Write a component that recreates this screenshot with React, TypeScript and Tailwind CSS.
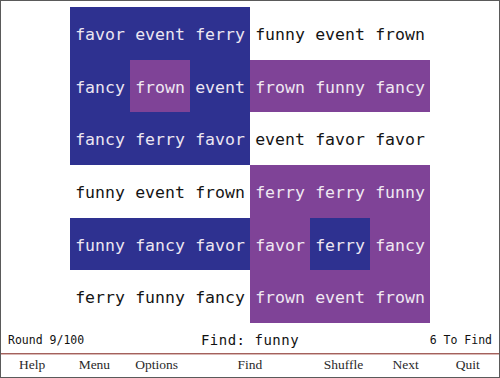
import React from "react";

type C = "b" | "p" | "w";
const rows: { words: string[]; colors: C[] }[] = [
  { words: ["favor", "event", "ferry", "funny", "event", "frown"], colors: ["b", "b", "b", "w", "w", "w"] },
  { words: ["fancy", "frown", "event", "frown", "funny", "fancy"], colors: ["b", "p", "b", "p", "p", "p"] },
  { words: ["fancy", "ferry", "favor", "event", "favor", "favor"], colors: ["b", "b", "b", "w", "w", "w"] },
  { words: ["funny", "event", "frown", "ferry", "ferry", "funny"], colors: ["w", "w", "w", "p", "p", "p"] },
  { words: ["funny", "fancy", "favor", "favor", "ferry", "fancy"], colors: ["b", "b", "b", "p", "b", "p"] },
  { words: ["ferry", "funny", "fancy", "frown", "event", "frown"], colors: ["w", "w", "w", "p", "p", "p"] },
];

const heights = ["h-[53px]", "h-[52px]", "h-[53px]", "h-[53px]", "h-[52px]", "h-[53px]"];

function cellClass(c: C) {
  if (c === "b") return "bg-[#2e3190] text-[#ece6f2]";
  if (c === "p") return "bg-[#7f4397] text-[#f0e8f2]";
  return "bg-white text-[#141414]";
}

export default function App() {
  const mono = { fontFamily: '"DejaVu Sans Mono", "Liberation Mono", monospace' };
  const serif = { fontFamily: '"Liberation Serif", serif' };
  return (
    <div className="w-[500px] h-[378px] bg-white border border-[#5a5a5a] flex flex-col overflow-hidden">
      <div className="flex justify-center pt-[6px]">
        <div className="flex flex-col w-[360px]">
          {rows.map((r, i) => (
            <div key={i} className={`flex ${heights[i]}`}>
              {r.words.map((w, j) => (
                <div
                  key={j}
                  className={`w-[60px] h-full flex items-center justify-center pt-[4px] text-[16.5px] leading-none ${cellClass(r.colors[j])}`}
                  style={mono}
                >
                  {w}
                </div>
              ))}
            </div>
          ))}
        </div>
      </div>
      <div className="h-[30px] flex items-center justify-between px-[7px] pt-[5px] text-[#111]" style={mono}>
        <div className="w-[120px] text-[11.5px]">Round 9/100</div>
        <div className="text-[14px] tracking-[0.5px]">Find: funny</div>
        <div className="w-[120px] text-right text-[11.5px]">6 To Find</div>
      </div>
      <div className="h-[2px] bg-[#a3615c] border-b border-[#d9b8b5]" />
      <div className="grid grid-cols-8 h-[22px] items-center pb-[5px] text-[13.5px] text-[#2a2a2a]" style={serif}>
        <div className="text-center">Help</div>
        <div className="text-center">Menu</div>
        <div className="text-center">Options</div>
        <div className="text-center col-span-2">Find</div>
        <div className="text-center">Shuffle</div>
        <div className="text-center">Next</div>
        <div className="text-center">Quit</div>
      </div>
    </div>
  );
}
